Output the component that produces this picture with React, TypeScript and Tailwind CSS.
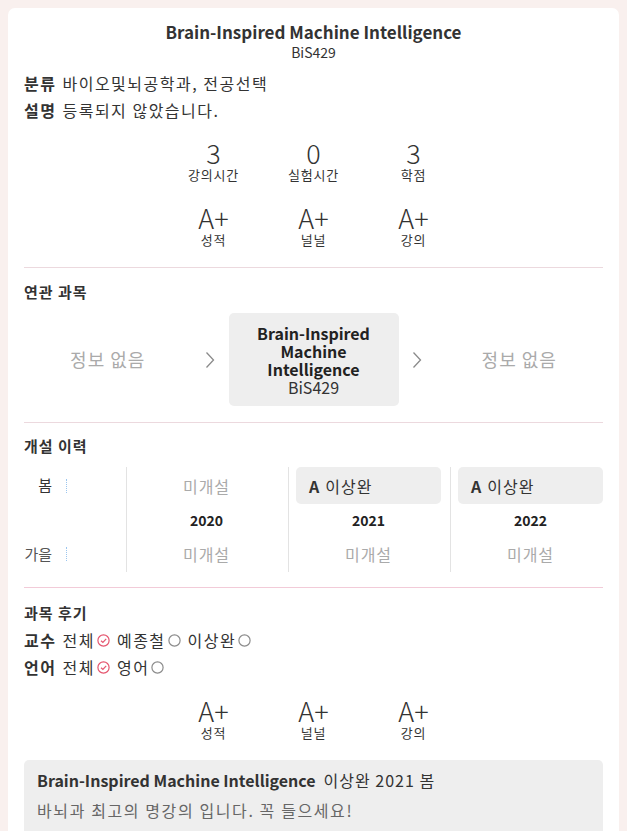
import React from "react";

const font = { fontFamily: '"Noto Sans CJK KR", "Noto Sans", sans-serif' };

function Chevron() {
  return (
    <svg width="10" height="18" viewBox="0 0 10 18" fill="none">
      <polyline points="1.5,1.5 8.5,9 1.5,16.5" stroke="#8a8a8a" strokeWidth="1.3" />
    </svg>
  );
}

function Checked() {
  return (
    <svg width="13" height="13" viewBox="0 0 13 13" fill="none" className="inline-block">
      <circle cx="6.5" cy="6.5" r="5.6" stroke="#e5566f" strokeWidth="1.2" />
      <polyline points="4,6.7 5.9,8.5 9.2,4.8" stroke="#e5566f" strokeWidth="1.2" />
    </svg>
  );
}

function Unchecked() {
  return (
    <svg width="13" height="13" viewBox="0 0 13 13" fill="none" className="inline-block">
      <circle cx="6.5" cy="6.5" r="5.6" stroke="#8c8c8c" strokeWidth="1.2" />
    </svg>
  );
}

function Stat({ value, label }: { value: string; label: string }) {
  return (
    <div className="w-[100px] flex flex-col items-center">
      <div className="text-[27px] leading-[30px] font-light text-[#333]">{value}</div>
      <div className="text-[13px] leading-[14px] tracking-[0.8px] text-[#333]">{label}</div>
    </div>
  );
}

function YearCol({ top, year, bottom }: { top: string | null; year: string; bottom: string | null }) {
  return (
    <div className="flex-1 border-l border-[#e3e3e3] pl-[7px] flex flex-col">
      <div className="h-[37px] flex items-center justify-center">
        {top ? (
          <div className="w-full h-[37px] rounded-[5px] bg-[#eeeeee] flex items-center pl-[13px] text-[16px] text-[#333]">
            <span className="font-bold mr-[6px]">A</span>
            <span className="tracking-[1px]">{top}</span>
          </div>
        ) : (
          <span className="text-[16px] tracking-[1px] text-[#aaaaaa]">미개설</span>
        )}
      </div>
      <div className="h-[32px] flex items-center justify-center text-[14px] font-bold text-[#222]">{year}</div>
      <div className="h-[36px] flex items-center justify-center">
        <span className="text-[16px] tracking-[1px] text-[#aaaaaa]">{bottom ?? "미개설"}</span>
      </div>
    </div>
  );
}

export default function App() {
  return (
    <div className="min-h-screen bg-[#f9f0ee] px-[8px] pt-[8px]" style={font}>
      <div className="bg-white rounded-[7px] px-4 pt-[14px] pb-[40px] text-[#333]">
        <div className="flex flex-col items-center">
          <div className="text-[17px] leading-[20px] font-bold text-[#333]">Brain-Inspired Machine Intelligence</div>
          <div className="text-[14px] leading-[20px] text-[#333]">BiS429</div>
        </div>

        <div className="mt-[8px] text-[16px] leading-[27px] tracking-[1.5px]">
          <div>
            <span className="font-bold mr-[6px]">분류</span>바이오및뇌공학과, 전공선택
          </div>
          <div>
            <span className="font-bold mr-[6px]">설명</span>등록되지 않았습니다.
          </div>
        </div>

        <div className="mt-[14px] flex justify-center">
          <Stat value="3" label="강의시간" />
          <Stat value="0" label="실험시간" />
          <Stat value="3" label="학점" />
        </div>
        <div className="mt-[21px] flex justify-center">
          <Stat value="A+" label="성적" />
          <Stat value="A+" label="널널" />
          <Stat value="A+" label="강의" />
        </div>

        <div className="mt-[20px] h-px bg-[#ecd9de]" />

        <div className="mt-[14px] text-[15px] leading-[20px] tracking-[1px] font-bold">연관 과목</div>
        <div className="mt-[11px] flex items-center">
          <div className="flex-1 text-center text-[18px] tracking-[1px] text-[#aaaaaa]">정보 없음</div>
          <div className="w-[37px] flex justify-center">
            <Chevron />
          </div>
          <div className="w-[170px] h-[93px] rounded-[5px] bg-[#eeeeee] flex flex-col items-center justify-center text-center text-[16px] leading-[18px] text-[#222]">
            <div className="font-bold">Brain-Inspired</div>
            <div className="font-bold">Machine</div>
            <div className="font-bold">Intelligence</div>
            <div className="text-[#333]">BiS429</div>
          </div>
          <div className="w-[37px] flex justify-center">
            <Chevron />
          </div>
          <div className="flex-1 text-center text-[18px] tracking-[1px] text-[#aaaaaa]">정보 없음</div>
        </div>

        <div className="mt-[16px] h-px bg-[#ecd9de]" />

        <div className="mt-[13px] text-[15px] leading-[20px] tracking-[1px] font-bold">개설 이력</div>
        <div className="mt-[11px] flex">
          <div className="w-[102px] flex flex-col">
            <div className="h-[37px] flex items-center">
              <span className="w-[28px] text-right text-[15px] text-[#333]">봄</span>
              <span className="ml-[14px] h-[14px] border-l border-dotted border-[#9cc6ef]" />
            </div>
            <div className="h-[32px]" />
            <div className="h-[36px] flex items-center">
              <span className="w-[28px] text-right text-[15px] text-[#555]">가을</span>
              <span className="ml-[14px] h-[14px] border-l border-dotted border-[#9cc6ef]" />
            </div>
          </div>
          <div className="flex-1 flex gap-[9px]">
            <YearCol top={null} year="2020" bottom={null} />
            <YearCol top="이상완" year="2021" bottom={null} />
            <YearCol top="이상완" year="2022" bottom={null} />
          </div>
        </div>

        <div className="mt-[15px] h-px bg-[#f2cbd8]" />

        <div className="mt-[15px] text-[15px] leading-[20px] tracking-[1px] font-bold">과목 후기</div>
        <div className="mt-[4px] text-[16px] leading-[27px] tracking-[1.5px]">
          <div className="flex items-center">
            <span className="font-bold mr-[6px]">교수</span>
            <span>전체</span>
            <span className="ml-[2px] mr-[7px] flex"><Checked /></span>
            <span>예종철</span>
            <span className="ml-[2px] mr-[7px] flex"><Unchecked /></span>
            <span>이상완</span>
            <span className="ml-[2px] flex"><Unchecked /></span>
          </div>
          <div className="flex items-center">
            <span className="font-bold mr-[6px]">언어</span>
            <span>전체</span>
            <span className="ml-[2px] mr-[7px] flex"><Checked /></span>
            <span>영어</span>
            <span className="ml-[2px] flex"><Unchecked /></span>
          </div>
        </div>

        <div className="mt-[15px] flex justify-center">
          <Stat value="A+" label="성적" />
          <Stat value="A+" label="널널" />
          <Stat value="A+" label="강의" />
        </div>

        <div className="mt-[20px] rounded-[5px] bg-[#eeeeee] px-[13px] pt-[10px] pb-[14px]">
          <div className="text-[16px] leading-[20px] text-[#333]">
            <span className="font-bold mr-[8px]">Brain-Inspired Machine Intelligence</span>
            <span className="tracking-[1px]">이상완 2021 봄</span>
          </div>
          <div className="mt-[8px] text-[16px] leading-[24px] tracking-[1.6px] text-[#666]">바뇌과 최고의 명강의 입니다. 꼭 들으세요!</div>
        </div>
      </div>
    </div>
  );
}
